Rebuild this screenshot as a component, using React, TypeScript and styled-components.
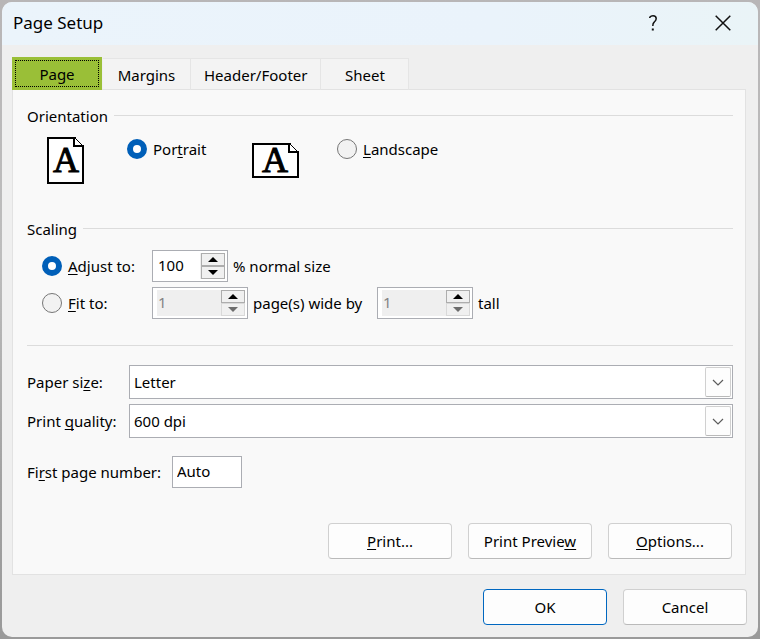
import React, { useState } from "react";
import styled, { createGlobalStyle, css } from "styled-components";

const GlobalStyle = createGlobalStyle`
  *, *::before, *::after { box-sizing: border-box; }
  html, body, #root { height: 100%; }
  body {
    margin: 0;
    background: linear-gradient(180deg, #b8b6b7 0, #bdbdbd 40%, #a2a2a2 75%, #9a9a9a 100%);
    color: #000;
    font: 15px/20px "Noto Sans", "Open Sans", sans-serif;
  }
  button, input, select { font: inherit; color: inherit; margin: 0; }
`;

const Desktop = styled.div`
  min-height: 100%;
  padding: 2px;
  display: flex;
`;

const Dialog = styled.div`
  flex: 1;
  display: flex;
  flex-direction: column;
  border-radius: 10px;
  overflow: hidden;
  background: #efefef;
`;

const TitleBar = styled.header`
  display: flex;
  align-items: center;
  height: 43px;
  padding: 0 10px 2px 11px;
  background: linear-gradient(90deg, #ebf4fb 0, #eaf3fb 65%, #eaf4f7 100%);
`;

const Title = styled.h1`
  flex: 1;
  margin: 0;
  font-size: 17px;
  line-height: 24px;
  font-weight: 400;
`;

const TitleButton = styled.button`
  display: grid;
  place-items: center;
  width: 50px;
  height: 40px;
  padding: 0;
  border: 0;
  background: none;
`;

const TitleActions = styled.div`
  display: flex;
  gap: 20px;
`;

const Main = styled.main`
  flex: 1;
  display: flex;
  flex-direction: column;
  padding: 12px 11px 12px 10px;
`;

const Tabs = styled.div`
  display: flex;
  align-items: flex-end;
  height: 33px;
  margin-bottom: -1px;
  z-index: 1;
`;

const Tab = styled.button<{ $active?: boolean }>`
  min-width: 88px;
  height: 32px;
  padding: 1px 13px 0;
  border: 1px solid #e5e5e5;
  border-left-width: 0;
  border-bottom-color: #e2e2e2;
  background: #f3f3f3;
  ${(p) =>
    p.$active &&
    css`
      height: 33px;
      width: 90px;
      margin-right: 1px;
      padding: 0;
      border: 0;
      background: #9abf37;
      outline: 1px dotted #000;
      outline-offset: -4px;
    `}
`;

const Panel = styled.section`
  flex: 1;
  display: flex;
  flex-direction: column;
  padding: 16px 12px 15px 14px;
  margin-right: 1px;
  border: 1px solid #e2e2e2;
  background: #f9f9f9;
`;

const Group = styled.fieldset`
  min-width: 0;
  margin: 0;
  padding: 0;
  border: 0;
`;

const GroupHeading = styled.legend`
  display: flex;
  align-items: center;
  gap: 6px;
  width: 100%;
  padding: 0;
  &::after {
    content: "";
    flex: 1;
    height: 1px;
    margin-bottom: 2px;
    background: #dcdcdc;
  }
`;

const OrientationRow = styled.div`
  display: flex;
  align-items: center;
  height: 47px;
  margin: 11px 0 35px 20px;
`;

const OrientationOption = styled.div<{ $width: number; $gap: number }>`
  display: flex;
  align-items: center;
  gap: ${(p) => p.$gap}px;
  width: ${(p) => p.$width}px;
  height: 47px;
`;

const RadioLabel = styled.label<{ $top?: boolean }>`
  display: flex;
  align-items: center;
  gap: 6px;
  height: 24px;
  white-space: nowrap;
  align-self: ${(p) => (p.$top ? "flex-start" : "center")};
`;

const Radio = styled.input.attrs({ type: "radio" })`
  appearance: none;
  flex: none;
  width: 20px;
  height: 20px;
  border: 1px solid #767676;
  border-radius: 50%;
  background: #f2f2f2;
  &:checked {
    border: 6px solid #005fb8;
    background: #fff;
  }
`;

const Key = styled.u`
  text-underline-offset: 2px;
  text-decoration-thickness: 1px;
  text-decoration-skip-ink: none;
`;

const ScalingRows = styled.div`
  display: flex;
  flex-direction: column;
  gap: 5px;
  padding: 11px 0 26px 15px;
`;

const ScalingRow = styled.div`
  display: grid;
  grid-template-columns: 110px auto auto auto auto;
  justify-content: start;
  align-items: center;
  height: 32px;
`;

const Caption = styled.span<{ $wide?: boolean }>`
  padding-left: 5px;
  width: ${(p) => (p.$wide ? "129px" : "auto")};
  white-space: nowrap;
`;

const SpinFrame = styled.div<{ $wide?: boolean }>`
  display: flex;
  width: ${(p) => (p.$wide ? 96 : 76)}px;
  height: 32px;
  padding: 2px;
  border: 1px solid #abadb3;
  background: #fff;
`;

const SpinInput = styled.input`
  flex: 1;
  min-width: 0;
  width: 0;
  height: 26px;
  padding: 0 0 3px 1px;
  margin-left: 2px;
  border: 0;
  background: #fff;
  outline: 0;
  &:disabled {
    background: #efefef;
    color: #838383;
  }
`;

const SpinButtons = styled.div`
  display: grid;
  grid-template-rows: 13px 13px;
  width: 25px;
  padding-left: 1px;
  background: #efefef;
`;

const SpinButton = styled.button`
  display: grid;
  place-items: center;
  padding: 0;
  border: 1px solid #adadad;
  background: #f0f0f0;
  &:disabled {
    border-color: #d9d9d9;
    color: #6d6d6d;
  }
`;

const Rule = styled.hr`
  width: 100%;
  height: 1px;
  margin: 0 0 19px;
  border: 0;
  background: #dcdcdc;
`;

const FormGrid = styled.div`
  display: grid;
  grid-template-columns: 102px 1fr;
  row-gap: 5px;
  align-items: center;
`;

const SelectFrame = styled.div`
  display: grid;
  grid-template-columns: 1fr 28px;
  height: 34px;
  border: 1px solid #abadb3;
  background: #fff;
`;

const Select = styled.select`
  grid-area: 1 / 1 / 2 / 3;
  appearance: none;
  width: 100%;
  padding: 0 32px 0 4px;
  border: 0;
  background: transparent;
`;

const Chevron = styled.span`
  grid-area: 1 / 2;
  display: grid;
  place-items: center;
  margin: 1px;
  border: 1px solid #d0d0d0;
  border-bottom-color: #b9b9b9;
  border-radius: 2px;
  background: #fdfdfd;
  pointer-events: none;
`;

const NumberRow = styled.div`
  display: flex;
  align-items: center;
  gap: 14px;
  margin-top: 18px;
`;

const NumberLabel = styled.label`
  width: 131px;
  white-space: nowrap;
`;

const NumberInput = styled.input`
  width: 70px;
  height: 32px;
  padding: 0 4px 3px;
  border: 1px solid #abadb3;
  background: #fff;
`;

const ButtonRow = styled.div<{ $footer?: boolean }>`
  display: flex;
  justify-content: flex-end;
  gap: 16px;
  margin-top: ${(p) => (p.$footer ? "14px" : "auto")};
  padding-right: ${(p) => (p.$footer ? 0 : 1)}px;
`;

const PushButton = styled.button<{ $primary?: boolean }>`
  width: 124px;
  height: 36px;
  padding: 0;
  border: 1px solid ${(p) => (p.$primary ? "#0067c0" : "#d0d0d0")};
  border-bottom-color: ${(p) => (p.$primary ? "#0067c0" : "#bababa")};
  border-radius: 4px;
  background: #fdfdfd;
`;

const PageSvg = styled.svg`
  flex: none;
  overflow: visible;
`;

function PageIcon({ landscape }: { landscape?: boolean }) {
  const w = landscape ? 47 : 37;
  const h = landscape ? 35 : 47;
  const x = w - 10;
  return (
    <PageSvg width={w} height={h} viewBox={`0 0 ${w} ${h}`} shapeRendering="crispEdges" aria-hidden="true">
      <path d={`M1 1H${x}L${w - 1} 10V${h - 1}H1Z`} fill="#fff" />
      <path d={`M0 0H${x + 2}V2H2V${h - 2}H${w - 2}V10H${x - 1}V0H${x + 1}V8H${w}V${h}H0Z`} fill="#000" />
      <path d={`M${x + 1} 1L${w - 1} 9`} stroke="#000" strokeWidth="1" fill="none" />
      <text
        x={landscape ? 23 : 19}
        y={landscape ? 29 : 35}
        textAnchor="middle"
        fontFamily="Liberation Serif, serif"
        fontSize="36"
        stroke="#000"
        strokeWidth="1"
      >
        A
      </text>
    </PageSvg>
  );
}

function Arrow({ down }: { down?: boolean }) {
  return (
    <svg width="10" height="5" viewBox="0 0 10 5" aria-hidden="true">
      <path d={down ? "M0 0H10L5 5Z" : "M0 5H10L5 0Z"} fill="currentColor" />
    </svg>
  );
}

type SpinnerProps = {
  label: string;
  value: number;
  onChange: (n: number) => void;
  wide?: boolean;
  disabled?: boolean;
};

function Spinner({ label, value, onChange, wide, disabled }: SpinnerProps) {
  return (
    <SpinFrame $wide={wide}>
      <SpinInput
        aria-label={label}
        value={value}
        disabled={disabled}
        onChange={(e) => onChange(Number(e.target.value) || 0)}
      />
      <SpinButtons>
        <SpinButton type="button" aria-label={`Increase ${label}`} onClick={() => onChange(value + 1)}>
          <Arrow />
        </SpinButton>
        <SpinButton
          type="button"
          aria-label={`Decrease ${label}`}
          disabled={disabled}
          onClick={() => onChange(value - 1)}
        >
          <Arrow down />
        </SpinButton>
      </SpinButtons>
    </SpinFrame>
  );
}

function DropDown({ id, options }: { id: string; options: string[] }) {
  return (
    <SelectFrame>
      <Select id={id}>
        {options.map((o) => (
          <option key={o}>{o}</option>
        ))}
      </Select>
      <Chevron>
        <svg width="12" height="7" viewBox="0 0 12 7" aria-hidden="true">
          <path d="M1 1L6 6L11 1" fill="none" stroke="#5c5c5c" strokeWidth="1.2" />
        </svg>
      </Chevron>
    </SelectFrame>
  );
}

export default function App() {
  const [orientation, setOrientation] = useState("portrait");
  const [mode, setMode] = useState("adjust");
  const [scale, setScale] = useState(100);
  const [wide, setWide] = useState(1);
  const [tall, setTall] = useState(1);
  const [first, setFirst] = useState("Auto");
  const fit = mode === "fit";

  return (
    <>
      <GlobalStyle />
      <Desktop>
        <Dialog role="dialog" aria-labelledby="title">
          <TitleBar>
            <Title id="title">Page Setup</Title>
            <TitleActions>
              <TitleButton aria-label="Help">
                <svg width="8" height="16" viewBox="0 0 8 16" fill="none" stroke="#111" strokeWidth="1.5">
                  <path d="M.8 3V2.2C1.6 1.2 2.6.8 4 .8C6 .8 7.2 2 7.2 3.8C7.2 5.4 6.2 6.2 5.2 7.1C4.2 8 3.8 8.8 3.8 11" />
                  <path d="M3.8 13.6V15.6" strokeWidth="2" />
                </svg>
              </TitleButton>
              <TitleButton aria-label="Close">
                <svg width="16" height="16" viewBox="0 0 16 16" fill="none" stroke="#111" strokeWidth="1.5">
                  <path d="M.7 .7L15.3 15.3M15.3 .7L.7 15.3" />
                </svg>
              </TitleButton>
            </TitleActions>
          </TitleBar>
          <Main>
            <Tabs role="tablist">
              <Tab role="tab" aria-selected="true" $active>Page</Tab>
              <Tab role="tab" aria-selected="false">Margins</Tab>
              <Tab role="tab" aria-selected="false">Header/Footer</Tab>
              <Tab role="tab" aria-selected="false">Sheet</Tab>
            </Tabs>
            <Panel role="tabpanel">
              <Group>
                <GroupHeading>Orientation</GroupHeading>
                <OrientationRow>
                  <OrientationOption $width={205} $gap={43}>
                    <PageIcon />
                    <RadioLabel $top>
                      <Radio
                        name="orientation"
                        checked={orientation === "portrait"}
                        onChange={() => setOrientation("portrait")}
                      />
                      <span>Por<Key>t</Key>rait</span>
                    </RadioLabel>
                  </OrientationOption>
                  <OrientationOption $width={200} $gap={38}>
                    <PageIcon landscape />
                    <RadioLabel $top>
                      <Radio
                        name="orientation"
                        checked={orientation === "landscape"}
                        onChange={() => setOrientation("landscape")}
                      />
                      <span><Key>L</Key>andscape</span>
                    </RadioLabel>
                  </OrientationOption>
                </OrientationRow>
              </Group>
              <Group>
                <GroupHeading>Scaling</GroupHeading>
                <ScalingRows>
                  <ScalingRow>
                    <RadioLabel>
                      <Radio name="scaling" checked={!fit} onChange={() => setMode("adjust")} />
                      <span><Key>A</Key>djust to:</span>
                    </RadioLabel>
                    <Spinner label="percent of normal size" value={scale} onChange={setScale} />
                    <Caption>% normal size</Caption>
                  </ScalingRow>
                  <ScalingRow>
                    <RadioLabel>
                      <Radio name="scaling" checked={fit} onChange={() => setMode("fit")} />
                      <span><Key>F</Key>it to:</span>
                    </RadioLabel>
                    <Spinner label="pages wide" value={wide} onChange={setWide} wide disabled={!fit} />
                    <Caption $wide>page(s) wide by</Caption>
                    <Spinner label="pages tall" value={tall} onChange={setTall} wide disabled={!fit} />
                    <Caption>tall</Caption>
                  </ScalingRow>
                </ScalingRows>
              </Group>
              <Rule />
              <FormGrid>
                <label htmlFor="paper">Paper si<Key>z</Key>e:</label>
                <DropDown id="paper" options={["Letter", "Legal", "A4"]} />
                <label htmlFor="quality">Print <Key>q</Key>uality:</label>
                <DropDown id="quality" options={["600 dpi", "300 dpi"]} />
              </FormGrid>
              <NumberRow>
                <NumberLabel htmlFor="first">Fi<Key>r</Key>st page number:</NumberLabel>
                <NumberInput id="first" value={first} onChange={(e) => setFirst(e.target.value)} />
              </NumberRow>
              <ButtonRow>
                <PushButton type="button"><Key>P</Key>rint...</PushButton>
                <PushButton type="button">Print Previe<Key>w</Key></PushButton>
                <PushButton type="button"><Key>O</Key>ptions...</PushButton>
              </ButtonRow>
            </Panel>
            <ButtonRow $footer>
              <PushButton type="button" $primary>OK</PushButton>
              <PushButton type="button">Cancel</PushButton>
            </ButtonRow>
          </Main>
        </Dialog>
      </Desktop>
    </>
  );
}
